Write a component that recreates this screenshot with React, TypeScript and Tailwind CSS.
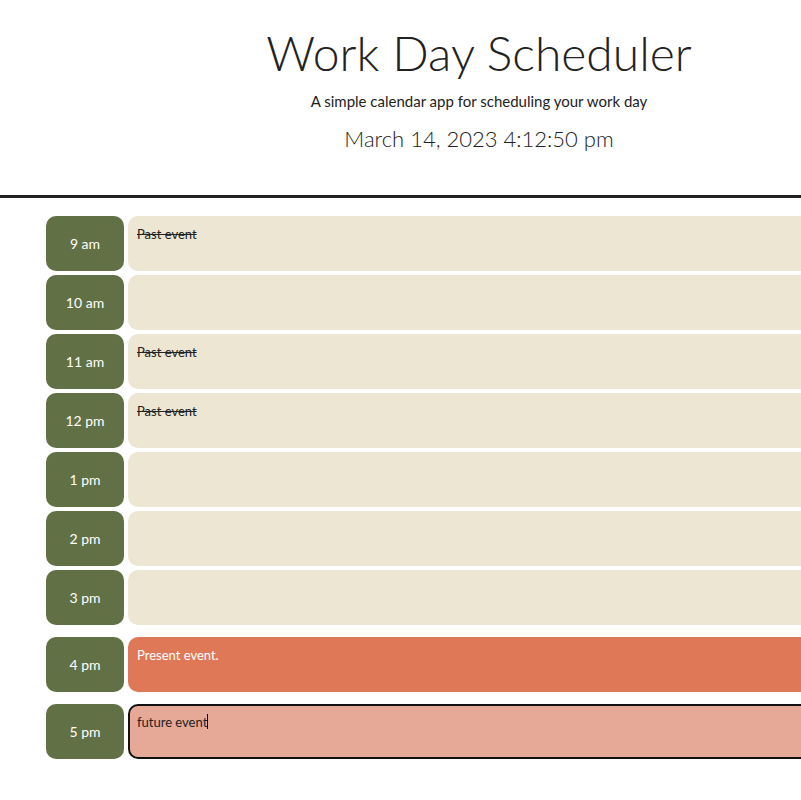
const hours = [
  { label: "9 am", text: "Past event", state: "past" },
  { label: "10 am", text: "", state: "past" },
  { label: "11 am", text: "Past event", state: "past" },
  { label: "12 pm", text: "Past event", state: "past" },
  { label: "1 pm", text: "", state: "past" },
  { label: "2 pm", text: "", state: "past" },
  { label: "3 pm", text: "", state: "past" },
  { label: "4 pm", text: "Present event.", state: "present" },
  { label: "5 pm", text: "future event", state: "future" },
];

function HourRow({ label, text, state }: { label: string; text: string; state: string }) {
  const box =
    state === "past"
      ? "bg-[#ede6d3] text-[#222] line-through px-[9px] pt-[9px]"
      : state === "present"
      ? "bg-[#df7857] text-white px-[9px] pt-[9px]"
      : "bg-[#e7a997] text-[#222] border-2 border-[#111] px-[7px] pt-[7px]";
  return (
    <div className={`flex gap-1 h-[55px] ${state === "past" ? "" : "mt-2"}`}>
      <div className="w-[78px] shrink-0 rounded-[10px] bg-[#627045] text-white text-[14px] flex items-center justify-center">
        {label}
      </div>
      <div className={`flex-1 rounded-l-[10px] text-[13px] ${box}`}>
        {text}
        {state === "future" && <span className="inline-block w-px h-[15px] bg-black align-middle -mt-1" />}
      </div>
    </div>
  );
}

export default function App() {
  return (
    <div className="w-full h-[800px] overflow-hidden bg-white" style={{ fontFamily: "Lato, 'Noto Sans', sans-serif" }}>
      <div className="w-[958px]">
        <header className="text-center text-[#222] pt-[29px] pb-[40px]">
          <h1 className="text-[48px] font-light leading-none">Work Day Scheduler</h1>
          <p className="text-[15px] mt-[13px]">A simple calendar app for scheduling your work day</p>
          <p className="text-[22px] mt-[9px] font-light">March 14, 2023 4:12:50 pm</p>
        </header>
        <div className="h-[3px] bg-[#222]" />
        <div className="pl-[46px] pt-[18px] flex flex-col gap-1">
          {hours.map((h) => (
            <HourRow key={h.label} {...h} />
          ))}
        </div>
      </div>
    </div>
  );
}
